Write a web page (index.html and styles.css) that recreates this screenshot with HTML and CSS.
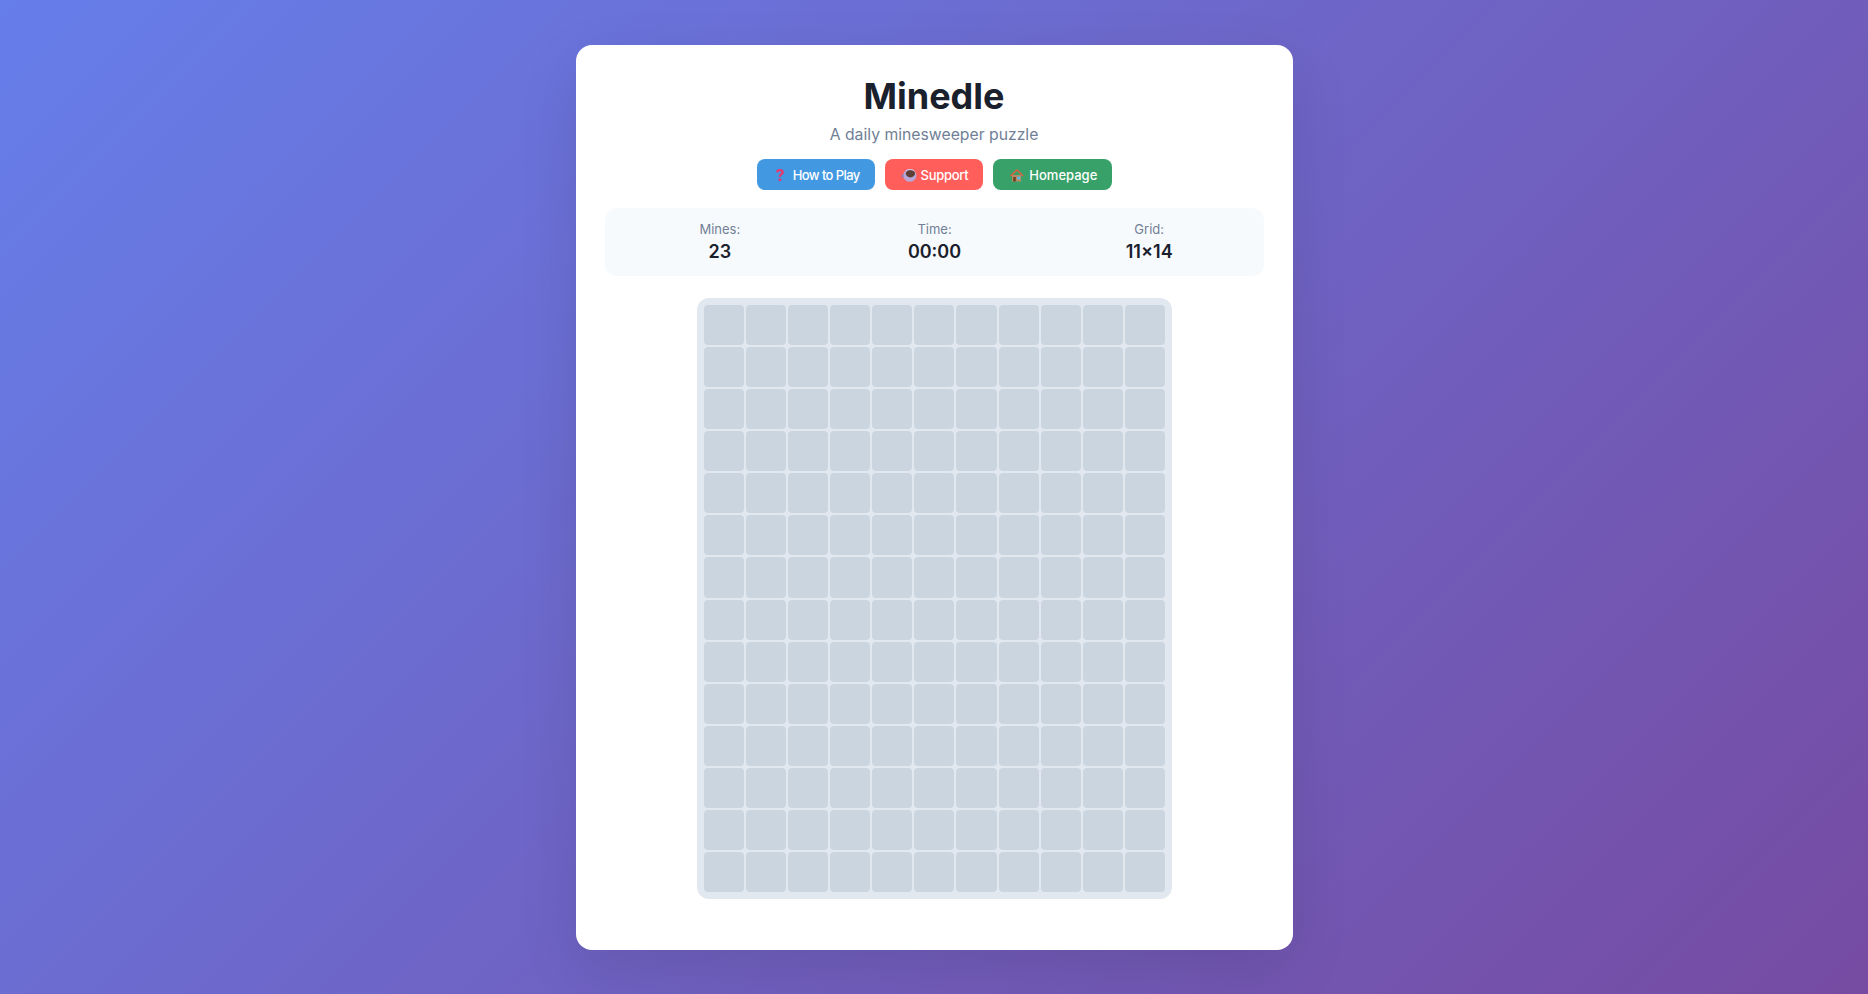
FILE: index.html
```html
<!DOCTYPE html>
<html lang="en">
<head>
<meta charset="utf-8">
<title>Minedle</title>
<link rel="stylesheet" href="styles.css">
</head>
<body>
<main class="card">
  <h1 class="title">Minedle</h1>
  <p class="subtitle">A daily minesweeper puzzle</p>
  <div class="actions">
    <a class="btn btn-blue"><svg class="ico" viewBox="0 0 16 16"><path d="M4 5.2C4.1 3 5.8 2 7.9 2c2.2 0 3.9 1.2 3.9 3.2 0 1.4-.9 2.2-1.9 2.9-.8.6-1 .9-1 1.8H6.7c0-1.6.4-2.2 1.5-3 .8-.6 1.1-1 1.1-1.6 0-.7-.6-1.1-1.4-1.1-1 0-1.6.6-1.7 1.4z" fill="#e8386d"/><circle cx="7.9" cy="12.8" r="1.5" fill="#e8386d"/></svg><span class="narrow">How to Play</span></a>
    <a class="btn btn-red"><svg class="ico" viewBox="0 0 16 16"><ellipse cx="9.8" cy="8.4" rx="6.6" ry="6.4" fill="#b9a6d6"/><path d="M3.4 11a2 2 0 0 1 0-4z" fill="#8f7cb0"/><ellipse cx="10.4" cy="6.6" rx="4.6" ry="3.8" fill="#5c4038"/><path d="M6 3.6a5 2.4 0 0 1 8 0" fill="none" stroke="#d9cfe8" stroke-width="1"/></svg><span class="tight">Support</span></a>
    <a class="btn btn-green"><svg class="ico" viewBox="0 0 16 16"><path d="M4 8h9v6.5H4z" fill="#b98a5e"/><path d="M9 2 2 8.6l1 1L9 4l5.6 5.6 1-1z" fill="#e0603f"/><path d="M5.2 10h2.6v4.5H5.2z" fill="#6b4226"/><path d="M9.2 9.6h3v2.8h-3z" fill="#5db8e8"/></svg>Homepage</a>
  </div>
  <section class="stats">
    <div class="stat"><span class="stat-label">Mines:</span><span class="stat-value">23</span></div>
    <div class="stat"><span class="stat-label">Time:</span><span class="stat-value">00:00</span></div>
    <div class="stat"><span class="stat-label">Grid:</span><span class="stat-value">11×14</span></div>
  </section>
  <div class="board" id="board">
    <i></i><i></i><i></i><i></i><i></i><i></i><i></i><i></i><i></i><i></i><i></i>
    <i></i><i></i><i></i><i></i><i></i><i></i><i></i><i></i><i></i><i></i><i></i>
    <i></i><i></i><i></i><i></i><i></i><i></i><i></i><i></i><i></i><i></i><i></i>
    <i></i><i></i><i></i><i></i><i></i><i></i><i></i><i></i><i></i><i></i><i></i>
    <i></i><i></i><i></i><i></i><i></i><i></i><i></i><i></i><i></i><i></i><i></i>
    <i></i><i></i><i></i><i></i><i></i><i></i><i></i><i></i><i></i><i></i><i></i>
    <i></i><i></i><i></i><i></i><i></i><i></i><i></i><i></i><i></i><i></i><i></i>
    <i></i><i></i><i></i><i></i><i></i><i></i><i></i><i></i><i></i><i></i><i></i>
    <i></i><i></i><i></i><i></i><i></i><i></i><i></i><i></i><i></i><i></i><i></i>
    <i></i><i></i><i></i><i></i><i></i><i></i><i></i><i></i><i></i><i></i><i></i>
    <i></i><i></i><i></i><i></i><i></i><i></i><i></i><i></i><i></i><i></i><i></i>
    <i></i><i></i><i></i><i></i><i></i><i></i><i></i><i></i><i></i><i></i><i></i>
    <i></i><i></i><i></i><i></i><i></i><i></i><i></i><i></i><i></i><i></i><i></i>
    <i></i><i></i><i></i><i></i><i></i><i></i><i></i><i></i><i></i><i></i><i></i>
  </div>
</main>
</body>
</html>
```
FILE: styles.css
```css
* { box-sizing: border-box; margin: 0; padding: 0; }
html, body { height: 100%; }
body {
  background: linear-gradient(135deg, #667eea 0%, #764ba2 100%);
  font-family: Inter, "Liberation Sans", sans-serif;
  display: flex;
  justify-content: center;
  align-items: center;
  overflow: hidden;
}
.card {
  width: 717px;
  height: 905px;
  background: #fff;
  border-radius: 16px;
  padding: 29px 29px;
  box-shadow: 0 20px 60px rgba(0, 0, 0, 0.1);
  display: flex;
  flex-direction: column;
  align-items: center;
}
.title { font-size: 36px; line-height: 44px; font-weight: 700; color: #1a202c; margin-bottom: 7px; }
.subtitle { font-size: 15.75px; line-height: 19px; color: #718096; margin-bottom: 15px; }
.actions { display: flex; gap: 10px; margin-bottom: 18px; margin-left: 1px; }
.btn {
  display: flex;
  align-items: center;
  justify-content: center;
  height: 31px;
  padding: 2px 15px 0;
  border-radius: 8px;
  color: #fff;
  font-size: 13px;
  font-weight: 500;
}
.narrow { letter-spacing: -0.6px; }
.tight { letter-spacing: -0.3px; }
.ico { width: 16px; height: 16px; margin-right: 5px; flex: none; overflow: visible; }
.btn-blue { background: #4299e1; }
.btn-red { background: #ff5e5b; }
.btn-green { background: #38a169; }
.stats {
  flex: none;
  width: 100%;
  height: 68px;
  padding: 0 7px 0 8px;
  display: flex;
  align-items: center;
  background: #f7fafc;
  border-radius: 12px;
  margin-bottom: 22.5px;
}
.stat { flex: 1; display: flex; flex-direction: column; align-items: center; }
.stat-label { font-size: 13px; line-height: 16px; color: #718096; margin-bottom: 4px; }
.stat-value { font-size: 18px; line-height: 22px; font-weight: 600; color: #1a202c; }
.board {
  flex: none;
  width: 475px;
  height: 601px;
  margin-left: 1px;
  display: grid;
  grid-template-columns: repeat(11, 1fr);
  grid-template-rows: repeat(14, 1fr);
  gap: 2px;
  padding: 7px 7.1px 7px 7px;
  background: #e2e8f0;
  border-radius: 12px;
}
.board i { display: block; background: #cbd5e0; border-radius: 4px; }
```
